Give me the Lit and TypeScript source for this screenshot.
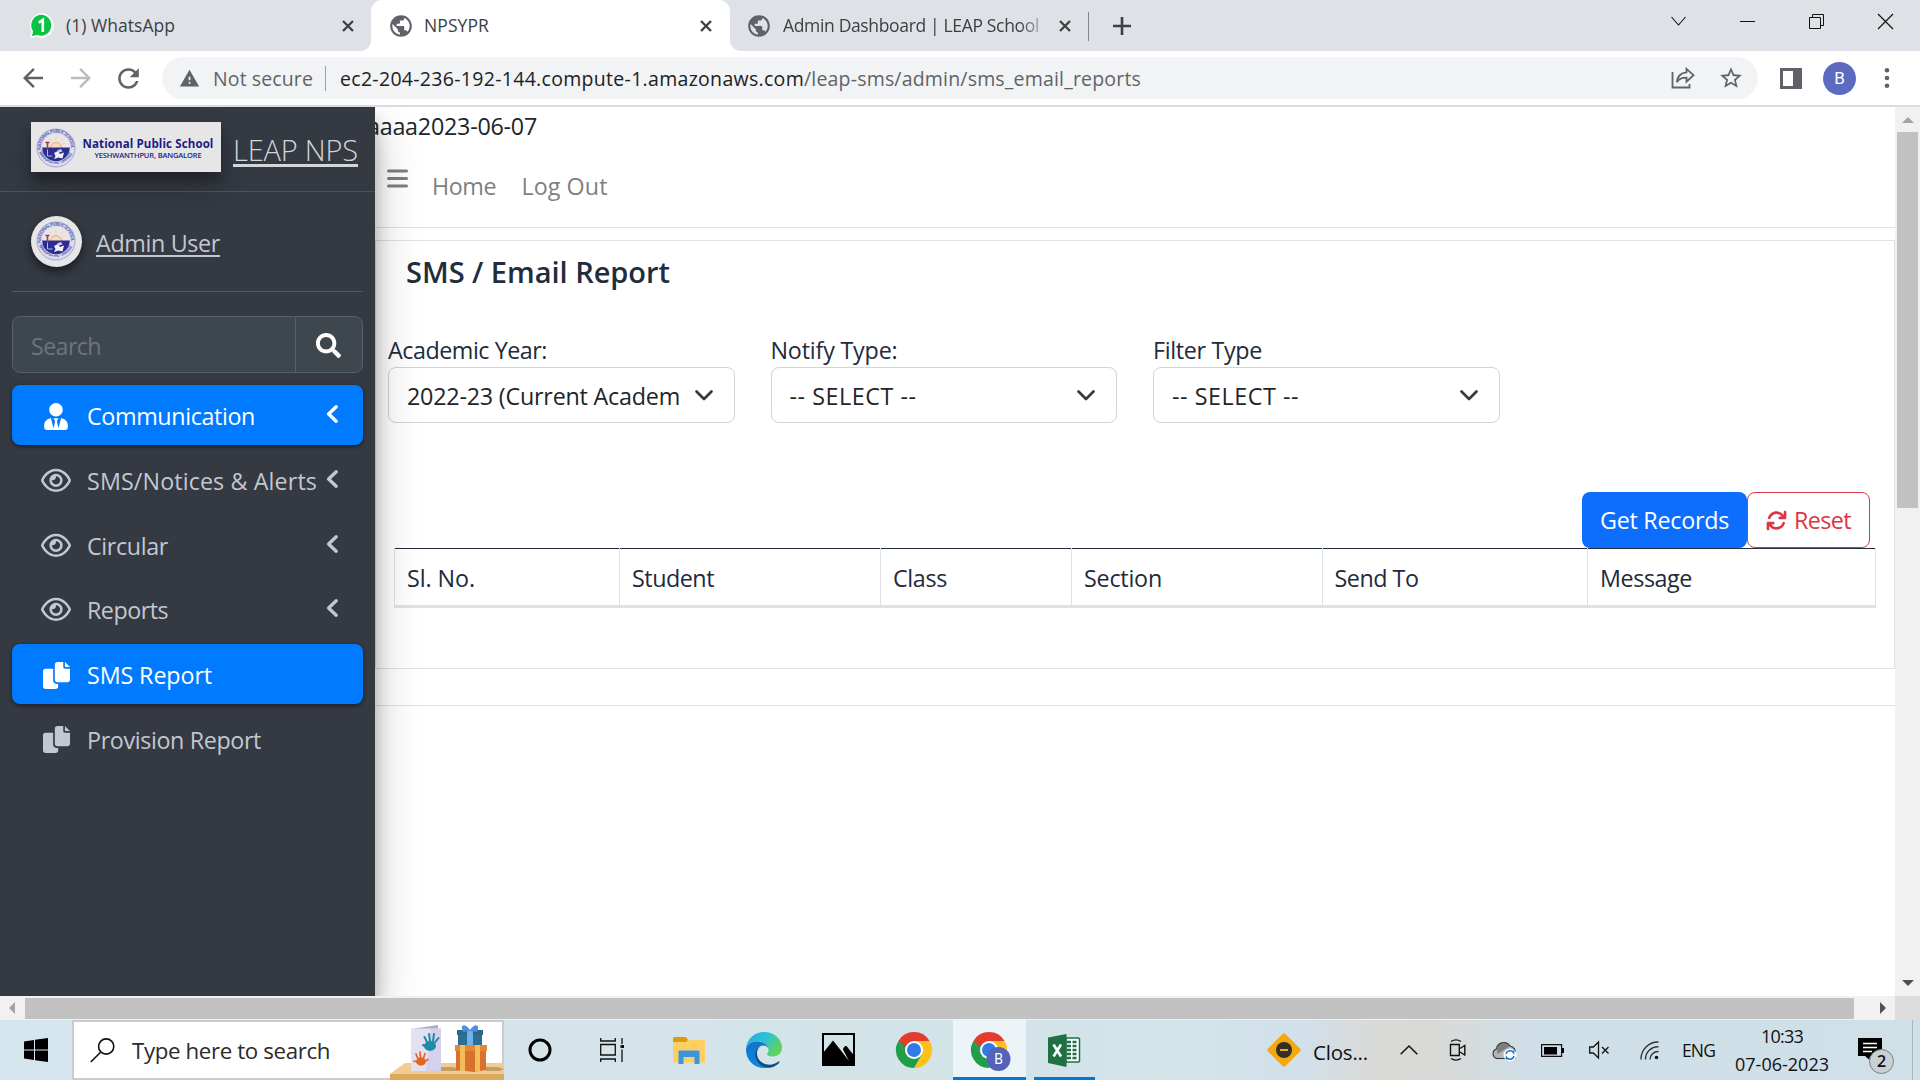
import { LitElement, html, svg, css, TemplateResult } from "lit";
import { classMap } from "lit/directives/class-map.js";

/* A run of text tracked so that it fills exactly `w` pixels. */
class FitText extends LitElement {
  static properties = { text: {}, w: { type: Number } };
  declare text: string;
  declare w: number;
  static styles = css`
    :host { display: inline-block; white-space: pre; flex: none; }
  `;
  updated() {
    const span = this.renderRoot.querySelector("span")!;
    span.style.letterSpacing = "0px";
    const natural = span.getBoundingClientRect().width;
    span.style.letterSpacing = (this.w - natural) / this.text.length + "px";
    this.style.width = this.w + "px";
  }
  render() {
    return html`<span>${this.text}</span>`;
  }
}
customElements.define("fit-text", FitText);

const fit = (text: string, w: number, cls = "") =>
  html`<fit-text class=${cls} .text=${text} .w=${w}></fit-text>`;

const icon = (cls: string, viewBox: string, body: TemplateResult) =>
  html`<svg class=${cls} viewBox=${viewBox} fill="currentColor">${body}</svg>`;

const path = (d: string) => svg`<path d=${d}></path>`;

const P = {
  globe: "M12 2C6.48 2 2 6.48 2 12s4.48 10 10 10 10-4.48 10-10S17.52 2 12 2zm-1 17.93c-3.95-.49-7-3.85-7-7.93 0-.62.08-1.21.21-1.79L9 15v1c0 1.1.9 2 2 2v1.93zm6.9-2.54c-.26-.81-1-1.39-1.9-1.39h-1v-3c0-.55-.45-1-1-1H8v-2h2c.55 0 1-.45 1-1V7h2c1.1 0 2-.9 2-2v-.41c2.93 1.19 5 4.06 5 7.41 0 2.08-.8 3.97-2.1 5.39z",
  reload: "M17.65 6.35C16.2 4.9 14.21 4 12 4c-4.42 0-7.99 3.58-7.99 8s3.57 8 7.99 8c3.73 0 6.84-2.55 7.73-6h-2.08c-.82 2.33-3.04 4-5.65 4-3.31 0-6-2.69-6-6s2.69-6 6-6c1.66 0 3.14.69 4.22 1.78L13 11h7V4l-2.35 2.35z",
  back: "M20 11H7.83l5.59-5.59L12 4l-8 8 8 8 1.41-1.41L7.83 13H20v-2z",
  forward: "M12 4l-1.41 1.41L16.17 11H4v2h12.17l-5.58 5.59L12 20l8-8z",
  star: "M22 9.24l-7.19-.62L12 2 9.19 8.63 2 9.24l5.46 4.73L5.82 21 12 17.27 18.18 21l-1.63-7.03L22 9.24zM12 15.4l-3.76 2.27 1-4.28-3.32-2.88 4.38-.38L12 6.1l1.71 4.04 4.38.38-3.32 2.88 1 4.28L12 15.4z",
  warn: "M1 21h22L12 2 1 21zm12-3h-2v-2h2v2zm0-4h-2v-4h2v4z",
  search: "M505 442.7L405.3 343c-4.5-4.5-10.6-7-17-7H372c27.6-35.3 44-79.7 44-128C416 93.1 322.9 0 208 0S0 93.1 0 208s93.1 208 208 208c48.3 0 92.7-16.4 128-44v16.3c0 6.4 2.5 12.5 7 17l99.7 99.7c9.4 9.4 24.6 9.4 33.9 0l28.3-28.3c9.4-9.4 9.4-24.6.1-34zM208 336c-70.7 0-128-57.2-128-128 0-70.7 57.2-128 128-128 70.7 0 128 57.2 128 128 0 70.7-57.2 128-128 128z",
  tie: "M224 256c70.7 0 128-57.3 128-128S294.7 0 224 0 96 57.3 96 128s57.3 128 128 128zm95.8 32.6L272 480l-32-136 32-56h-96l32 56-32 136-47.8-191.4C56.9 292 0 350.3 0 422.4V464c0 26.5 21.5 48 48 48h352c26.5 0 48-21.5 48-48v-41.6c0-72.1-56.9-130.4-128.2-133.8z",
  eye: "M288 80c-65.2 0-118.8 29.6-159.9 67.7C89.6 183.5 63 226 49.4 256c13.6 30 40.2 72.5 78.6 108.3C169.2 402.4 222.8 432 288 432s118.8-29.6 159.9-67.7C486.4 328.5 513 286 526.6 256c-13.6-30-40.2-72.5-78.6-108.3C406.8 109.6 353.2 80 288 80zM95.4 112.6C142.5 68.8 207.2 32 288 32s145.5 36.8 192.6 80.6c46.8 43.5 78.1 95.4 93 131.1c3.3 7.9 3.3 16.7 0 24.6c-14.9 35.7-46.2 87.7-93 131.1C433.5 443.2 368.8 480 288 480s-145.5-36.8-192.6-80.6C48.6 356 17.3 304 2.5 268.3c-3.3-7.9-3.3-16.7 0-24.6C17.3 208 48.6 156 95.4 112.6zM288 336c44.2 0 80-35.8 80-80s-35.8-80-80-80c-.7 0-1.3 0-2 0c1.3 5.1 2 10.5 2 16c0 35.3-28.7 64-64 64c-5.5 0-10.9-.7-16-2c0 .7 0 1.3 0 2c0 44.2 35.8 80 80 80zm0-208a128 128 0 1 1 0 256 128 128 0 1 1 0-256z",
  copy: "M384 96L384 0h-112c-26.51 0-48 21.49-48 48v288c0 26.51 21.49 48 48 48H464c26.51 0 48-21.49 48-48V128h-95.1C398.4 128 384 113.6 384 96zM416 0v96h96L416 0zM192 352V128h-144c-26.51 0-48 21.49-48 48v288c0 26.51 21.49 48 48 48h192c26.51 0 48-21.49 48-48L288 416h-32C220.7 416 192 387.3 192 352z",
  rotate: "M464 16c-17.67 0-32 14.31-32 32v74.09C392.1 66.52 327.4 32 256 32C161.5 32 78.59 92.34 49.58 182.2c-5.438 16.81 3.797 34.88 20.61 40.28c16.89 5.5 34.88-3.812 40.3-20.59C130.9 138.5 189.4 96 256 96c50.5 0 96.26 24.55 124.4 64H336c-17.67 0-32 14.31-32 32s14.33 32 32 32h128c17.67 0 32-14.31 32-32V48C496 30.31 481.7 16 464 16zM441.8 289.6c-16.92-5.438-34.88 3.812-40.3 20.59C381.1 373.5 322.6 416 256 416c-50.5 0-96.25-24.55-124.4-64H176c17.67 0 32-14.31 32-32s-14.33-32-32-32h-128c-17.67 0-32 14.31-32 32v144c0 17.69 14.33 32 32 32s32-14.31 32-32v-74.09C119.9 445.5 184.6 480 255.1 480c94.45 0 177.4-60.34 206.4-150.2C467.9 313 458.6 294.1 441.8 289.6z",
};

const base = css`
  * { box-sizing: border-box; }
  svg { display: block; flex: none; overflow: visible; }
`;

/* ---------- Browser chrome: tab strip and toolbar ---------- */
class BrowserChrome extends LitElement {
  static styles = [base, css`
    :host { display: block; color: #3c4043; }
    .tabs { display: flex; height: 51px; background: #dee1e6; font-size: 17.5px; line-height: 51px; }
    .tab { display: flex; align-items: center; height: 51px; }
    .t1 { width: 371px; padding: 0 17px 0 29px; }
    .t2 { width: 359px; padding: 0 18px 0 17px; background: #fff; border-radius: 11px 11px 0 0; position: relative; }
    .t2::before, .t2::after { content: ""; position: absolute; bottom: 0; width: 10px; height: 10px; }
    .t2::before { left: -10px; background: radial-gradient(circle at 0 0, transparent 9.5px, #fff 10px); }
    .t2::after { right: -10px; background: radial-gradient(circle at 100% 0, transparent 9.5px, #fff 10px); }
    .t3 { width: 358px; padding: 0 17px 0 16px; }
    .fav { width: 26px; height: 26px; color: #5f6368; }
    .wa { width: 26px; height: 26px; margin-right: 11px; }
    .gap { margin-right: 11px; }
    .t2 .gap { margin-right: 10px; }
    .x { width: 12px; height: 12px; margin-left: auto; color: #3c4043; }
    .fade { -webkit-mask-image: linear-gradient(90deg, #000 92%, rgba(0,0,0,.35) 100%); mask-image: linear-gradient(90deg, #000 92%, rgba(0,0,0,.35) 100%); }
    .rule { width: 1px; height: 29px; background: #80868b; margin-top: 12px; }
    .plus { width: 18px; height: 18px; margin: 17px 0 0 24px; }
    .win { display: flex; margin-left: auto; gap: 54px; padding: 14px 27px 0 0; color: #111; }
    .win svg { width: 15px; height: 15px; }
    .bar { display: flex; align-items: center; height: 54px; background: #fff; padding-left: 18px; font-size: 19.5px; color: #5f6368; }
    .nav { width: 30px; height: 30px; }
    .n2 { margin-left: 18px; color: #babcbe; }
    .n3 { width: 31px; height: 31px; margin-left: 17px; }
    .omni { display: flex; align-items: center; width: 1596px; height: 42px; margin-left: 18px; background: #f1f3f4; border-radius: 21px; padding: 0 14px 0 17px; }
    .warn { width: 21px; height: 21px; margin-right: 13px; }
    .sep { width: 1px; height: 25px; margin: 0 14px 0 12px; background: #9aa0a6; }
    .host { color: #202124; }
    .share { width: 24px; height: 22px; margin-left: auto; }
    .star { width: 26px; height: 26px; margin-left: 23px; }
    .panel { width: 22px; height: 21px; margin-left: 22px; }
    .me { width: 33px; height: 33px; margin-left: 21px; border-radius: 50%; background: #5c6bc0; color: #fff; font: 17px/33px Roboto, sans-serif; text-align: center; }
    .dots { width: 6px; height: 20px; margin-left: 28px; }
    .line { height: 2px; background: #dadce0; }
  `];
  cross() {
    return html`<svg class="x" viewBox="0 0 12 12"><path d="M1 1l10 10M11 1L1 11" stroke="currentColor" stroke-width="2.3"></path></svg>`;
  }
  render() {
    return html`
      <div class="tabs">
        <div class="tab t1">
          <svg class="wa" viewBox="0 0 26 26">
            <path d="M1 25l1.500-6A12 12.500 0 1 1 8 24z" fill="#f4fbf5"></path>
            <path d="M3 23l1.200-4.500A10 10.500 0 1 1 8.500 22z" fill="#0cc143"></path>
            <path d="M9.800 9.600l4-2.600v12" fill="none" stroke="#fff" stroke-width="2.600"></path>
          </svg>
          ${fit("(1) WhatsApp", 109)}${this.cross()}
        </div>
        <div class="tab t2">
          ${icon("fav gap", "0 0 24 24", path(P.globe))}${fit("NPSYPR", 65)}${this.cross()}
        </div>
        <div class="tab t3">
          ${icon("fav gap", "0 0 24 24", path(P.globe))}${fit("Admin Dashboard | LEAP School", 256, "fade")}${this.cross()}
        </div>
        <div class="rule"></div>
        <svg class="plus" viewBox="0 0 18 18"><path d="M9 0v18M0 9h18" stroke="#3c4043" stroke-width="2.600"></path></svg>
        <div class="win">
          <svg viewBox="0 0 15 15"><path d="M.5 3l7 8 7-8" fill="none" stroke="currentColor" stroke-width="1.100"></path></svg>
          <svg viewBox="0 0 15 15"><path d="M0 7.500h15" stroke="currentColor"></path></svg>
          <svg viewBox="0 0 15 15"><path d="M.5 3.500h11v11H.5zM3.500 3.500v-3h11v11h-3" fill="none" stroke="currentColor"></path></svg>
          <svg viewBox="0 0 15 15"><path d="M0 0l15 15M15 0L0 15" stroke="currentColor" stroke-width="1.200"></path></svg>
        </div>
      </div>
      <div class="bar">
        ${icon("nav", "0 0 24 24", path(P.back))}
        ${icon("nav n2", "0 0 24 24", path(P.forward))}
        ${icon("nav n3", "0 0 24 24", path(P.reload))}
        <div class="omni">
          ${icon("warn", "0 0 24 24", path(P.warn))}
          ${fit("Not secure", 100)}
          <div class="sep"></div>
          ${fit("ec2-204-236-192-144.compute-1.amazonaws.com", 464, "host")}${fit("/leap-sms/admin/sms_email_reports", 337)}
          <svg class="share" viewBox="0 0 24 22" fill="none" stroke="currentColor" stroke-width="1.800">
            <path d="M1.500 5v15.500h17V17"></path>
            <path d="M15.500 1.800l7 6.400-7 6.400v-3.900c-4.500-.2-7.500 1.200-9.700 4.500.6-5.500 3.500-9.300 9.700-9.900z"></path>
          </svg>
          ${icon("star", "0 0 24 24", path(P.star))}
        </div>
        <svg class="panel" viewBox="0 0 22 21"><path d="M0 0h22v21H0zM3 3v15h10V3z" fill="currentColor" fill-rule="evenodd"></path></svg>
        <div class="me">B</div>
        <svg class="dots" viewBox="0 0 6 20" fill="currentColor"><circle cx="3" cy="2.300" r="2.300"></circle><circle cx="3" cy="10" r="2.300"></circle><circle cx="3" cy="17.700" r="2.300"></circle></svg>
      </div>
      <div class="line"></div>`;
  }
}
customElements.define("browser-chrome", BrowserChrome);

/* ---------- School seal ---------- */
class SchoolSeal extends LitElement {
  static styles = css`:host { display: block; } svg { display: block; width: 100%; height: 100%; } .ring { font: 700 4.800px "Open Sans", sans-serif; fill: #6668b8; }`;
  render() {
    return html`<svg viewBox="0 0 40 40">
      <circle cx="20" cy="20" r="19" fill="#dcdcec" stroke="#a3a4d4" stroke-width="1"></circle>
      <defs>
        <path id="up" d="M5.200 22A15 15 0 1 1 34.800 22"></path>
        <path id="down" d="M3 24A18.200 18.200 0 0 0 37 24"></path>
      </defs>
      <text class="ring"><textPath href="#up" textLength="50">NATIONAL PUBLIC SCHOOL</textPath></text>
      <text class="ring"><textPath href="#down" textLength="42">BANGALORE - 560 022</textPath></text>
      <circle cx="20" cy="20" r="13.800" fill="#e9e6e4"></circle>
      <path d="M14.500 20a5.500 5.500 0 0 1 11 0" fill="#f5dcc0" stroke="#f0a860" stroke-width="1"></path>
      <path d="M20 8.500v3M13.500 10.500l1.500 2.500M26.500 10.500L25 13M29 15l-2.500 1.300" stroke="#f3c79a" stroke-width=".8"></path>
      <path d="M6.200 19.500h27.600a13.800 13.800 0 0 1-27.600 0z" fill="#2b2d92"></path>
      <path d="M9.500 14.500h4M11.500 15v6" stroke="#a23a44" stroke-width="1.600"></path>
      <path d="M11.500 21.500v6.500h5" fill="none" stroke="#b9bbe0" stroke-width="1"></path>
      <path d="M18 25l4-2 2 3 4-1.500-1.500 6-4-1-4.500 1.500 1.500-3z" fill="#f1f1f8"></path>
      <path d="M21 22.500l4-1.500 1.500 2.500-3.500 1z" fill="#cfd0ea"></path>
    </svg>`;
  }
}
customElements.define("school-seal", SchoolSeal);

/* ---------- Sidebar ---------- */
interface MenuItem { label: string; w: number; icon: "tie" | "eye" | "copy"; active?: boolean; arrow?: boolean; }
const MENU: MenuItem[] = [
  { label: "Communication", w: 168, icon: "tie", active: true, arrow: true },
  { label: "SMS/Notices & Alerts", w: 230, icon: "eye", arrow: true },
  { label: "Circular", w: 81, icon: "eye", arrow: true },
  { label: "Reports", w: 81, icon: "eye", arrow: true },
  { label: "SMS Report", w: 125, icon: "copy", active: true },
  { label: "Provision Report", w: 174, icon: "copy" },
];
const VB = { tie: "0 0 448 512", eye: "0 0 576 512", copy: "0 0 512 512" };

class SideBar extends LitElement {
  static styles = [base, css`
    :host { display: block; flex: none; width: 375px; height: 889px; background: #343942; color: #c2c7d0; font-size: 23.300px;
      box-shadow: 0 21px 42px rgba(0,0,0,.25), 0 15px 15px rgba(0,0,0,.22); position: relative; z-index: 2; }
    .brand { display: flex; height: 85px; padding: 15px 0 0 31px; border-bottom: 1px solid #4b545c; }
    .logo { display: flex; width: 190px; height: 50px; background: #e6e6e6; padding: 6px 0 0 5px;
      box-shadow: 0 15px 30px rgba(0,0,0,.19), 0 9px 9px rgba(0,0,0,.23); }
    .logo school-seal { width: 40px; height: 40px; }
    .words { display: flex; flex-direction: column; align-items: center; width: 130px; margin-left: 7px; padding-top: 9px; color: #1b1b85; }
    .l1 { font-size: 11.500px; font-weight: 700; line-height: 13px; }
    .l2 { font-size: 7.500px; font-weight: 600; line-height: 10px; }
    .name { font-size: 29px; font-weight: 300; line-height: 40px; margin: 8px 0 0 12px; color: #d3d6da; text-decoration: underline; text-decoration-thickness: 2.500px; text-underline-offset: 3px; }
    .user { display: flex; height: 100px; margin: 0 12px; padding: 24px 0 0 19px; border-bottom: 1px solid #4f5962; }
    .ava { width: 51px; height: 51px; border-radius: 50%; background: #e6e6e6; padding: 5px 6px 6px 5px; box-shadow: 0 5px 10px rgba(0,0,0,.3), 0 4px 6px rgba(0,0,0,.25); }
    .who { line-height: 36px; margin: 9px 0 0 14px; text-decoration: underline; text-decoration-thickness: 2px; text-underline-offset: 3px; }
    .find { display: flex; width: 351px; height: 57px; margin: 24px 12px 0; background: #3f474e; border: 1px solid #56606a; border-radius: 8px; }
    .ph { width: 282px; padding: 2px 0 0 18px; line-height: 54px; color: #6c757d; }
    .go { flex: 1; border-left: 1px solid #56606a; padding: 16px 0 0 20px; color: #fff; }
    .go svg { width: 25px; height: 25px; }
    ul { list-style: none; margin: 12px 12px 0; padding: 0; display: flex; flex-direction: column; gap: 4.750px; }
    li { display: flex; height: 60px; border-radius: 8px; padding: 0 25px 0 29px; line-height: 62px; }
    li.active { background: #007bff; color: #fff; box-shadow: 0 1.500px 4px rgba(0,0,0,.24), 0 1.500px 3px rgba(0,0,0,.2); }
    .ic { display: flex; width: 30px; height: 57px; align-items: center; justify-content: center; margin-right: 16px; padding-top: 3px; }
    .eye { width: 30px; height: 26.700px; margin-top: 1px; }
    .tie { width: 24px; height: 27px; margin-top: 2px; }
    .copy { width: 27px; height: 27px; margin-top: 2px; }
    .arrow { width: 12px; height: 18px; margin: 20px 0 0 auto; }
  `];
  render() {
    return html`
      <div class="brand">
        <div class="logo"><school-seal></school-seal>
          <div class="words">${fit("National Public School", 131, "l1")}${fit("YESHWANTHPUR, BANGALORE", 107, "l2")}</div>
        </div>
        ${fit("LEAP NPS", 125, "name")}
      </div>
      <div class="user"><school-seal class="ava"></school-seal>${fit("Admin User", 124, "who")}</div>
      <div class="find"><div class="ph">${fit("Search", 70)}</div><div class="go">${icon("", "0 0 512 512", path(P.search))}</div></div>
      <ul>
        ${MENU.map((m) => html`<li class=${classMap({ active: !!m.active })}>
          <span class="ic">${icon(m.icon, VB[m.icon], path(P[m.icon]))}</span>
          ${fit(m.label, m.w)}
          ${m.arrow ? html`<svg class="arrow" viewBox="0 0 12 18"><path d="M10.200 1.800L2.600 9l7.600 7.200" fill="none" stroke="currentColor" stroke-width="3.400" stroke-linecap="round" stroke-linejoin="round"></path></svg>` : ""}
        </li>`)}
      </ul>`;
  }
}
customElements.define("side-bar", SideBar);

/* ---------- Report page ---------- */
const FILTERS = [
  { label: "Academic Year:", lw: 159, value: "2022-23 (Current Academ", vw: 273 },
  { label: "Notify Type:", lw: 127, value: "-- SELECT --", vw: 127 },
  { label: "Filter Type", lw: 109, value: "-- SELECT --", vw: 127 },
];
const COLUMNS: [string, number, number][] = [
  ["Sl. No.", 68, 225], ["Student", 82, 261], ["Class", 54, 191], ["Section", 78, 250.5], ["Send To", 84, 265.5], ["Message", 92, 288],
];

class ReportPage extends LitElement {
  static styles = [base, css`
    :host { display: block; width: 1520px; height: 889px; background: #fff; color: #212b3c; font-size: 23.300px; line-height: 36px; }
    .stray { display: block; margin-left: -8px; padding-top: 1px; color: #212529; }
    .top { display: flex; height: 84px; border-bottom: 1px solid #dee2e6; color: #7f7f7f; padding: 24px 0 0 12px; }
    .burger { width: 21px; height: 19px; margin-top: 1px; }
    .home { margin: 0 25.500px 0 24px; }
    .card { height: 429px; margin-top: 12px; border: 1px solid #dee2e6; padding: 0 18px 0 12px; }
    h5 { margin: 0; padding: 11px 0 0 18px; font-size: 29px; font-weight: 600; line-height: 40px; color: #1f2d3d; }
    .filters { display: flex; gap: 36px; padding-top: 39px; }
    .filters > div { width: 346.500px; }
    .filters .lab { display: block; height: 36px; line-height: 38.500px; }
    .sel { display: flex; height: 56px; border: 1px solid #ced4da; border-radius: 8px; padding: 0 21px 0 18px; line-height: 56px; color: #212529; }
    .chev { width: 18px; height: 11px; margin: 22px 0 0 auto; }
    .acts { display: flex; justify-content: flex-end; padding: 69px 6px 0 0; }
    .get, .reset { display: flex; height: 56px; border-radius: 8px; line-height: 57.500px; }
    .get { width: 165px; padding-left: 18px; background: #0d6efd; color: #fff; }
    .reset { width: 123px; padding-left: 18px; border: 1px solid #dc3545; color: #dc3545; line-height: 55.500px; }
    .reset svg { width: 21px; height: 21px; margin: 17px 7px 0 0; }
    .table { display: flex; width: 1482px; height: 60px; margin-left: 6px; border-bottom: 3px solid #dee2e6; border-left: 1px solid #dee2e6; }
    .cell { border-right: 1px solid #dee2e6; padding-left: 12px; line-height: 58px; background: linear-gradient(#212d3d, #212d3d) 0 0 / 100% 1px no-repeat; height: 57px; padding-top: 1px; flex: none; }
    .foot { height: 37px; border-bottom: 1px solid #dee2e6; }
  `];
  render() {
    return html`
      ${fit("aaaa2023-06-07", 170, "stray")}
      <div class="top">
        <svg class="burger" viewBox="0 0 21 19"><path d="M1.500 2h18M1.500 9.500h18M1.500 17h18" stroke="currentColor" stroke-width="3" stroke-linecap="round"></path></svg>
        ${fit("Home", 64, "home")}${fit("Log Out", 86)}
      </div>
      <div class="card">
        <h5>${fit("SMS / Email Report", 264)}</h5>
        <div class="filters">
          ${FILTERS.map((f) => html`<div>
            ${fit(f.label, f.lw, "lab")}
            <div class="sel">${fit(f.value, f.vw)}
              <svg class="chev" viewBox="0 0 18 11"><path d="M1.500 1.500L9 9l7.500-7.500" fill="none" stroke="#343a40" stroke-width="2.700" stroke-linecap="round" stroke-linejoin="round"></path></svg>
            </div>
          </div>`)}
        </div>
        <div class="acts">
          <div class="get">${fit("Get Records", 129)}</div>
          <div class="reset">${icon("", "0 0 512 512", path(P.rotate))}${fit("Reset", 57)}</div>
        </div>
        <div class="table">
          ${COLUMNS.map(([t, w, cw]) => html`<div class="cell" style="width:${cw}px">${fit(t, w)}</div>`)}
        </div>
      </div>
      <div class="foot"></div>`;
  }
}
customElements.define("report-page", ReportPage);

/* ---------- Windows taskbar ---------- */
class TaskBar extends LitElement {
  static styles = [base, css`
    :host { display: flex; height: 60px; color: #111; font-size: 18px;
      background: linear-gradient(90deg, #d6e6ee 0, #d5e4eb 30%, #d2e4e8 50%, #d3e4ea 62%, #d2e0e9 68%, #dad9d5 72%, #d8dad7 75%, #cfdfe8 80%, #cfe0e7 100%); }
    .start { width: 24px; height: 24px; margin: 18px 24px 0 24px; }
    .box { display: flex; width: 432px; height: 60px; background: #fff; border: 2px solid #ccc; font-size: 22.300px; line-height: 58px; color: #2b2b2b; }
    .mag { width: 25px; height: 25px; margin: 16px 17px 0 16px; }
    .art { width: 114px; height: 60px; margin: -2px -2px 0 auto; }
    .cort { width: 24px; height: 24px; margin: 18px 0 0 24px; }
    .tv { width: 24px; height: 24px; margin: 18px 0 0 48px; }
    .ex { width: 32px; height: 27px; margin: 17px 0 0 49px; }
    .edge { width: 36px; height: 36px; margin: 12px 0 0 41px; }
    .pic { width: 33px; height: 33px; margin: 13px 0 0 40px; }
    .chrome { width: 36px; height: 36px; margin: 12px 0 0 41px; }
    .on { width: 73px; height: 60px; margin-left: 21px; background: #edf4f7; border-bottom: 3px solid #0078d7; padding: 12px 0 0 18px; }
    .on svg { width: 40px; height: 40px; }
    .b { font: 14px Roboto, sans-serif; fill: #fff; text-anchor: middle; }
    .xl { width: 61px; height: 60px; margin-left: 8px; border-bottom: 3px solid #0078d7; padding: 14px 0 0 14px; }
    .xl svg { width: 32px; height: 33px; }
    .tray { display: flex; margin-left: auto; }
    .dia { width: 34px; height: 34px; margin: 13px 12px 0 0; }
    .clos { font-size: 20.500px; line-height: 64px; }
    .up { width: 18px; height: 10px; margin: 25px 0 0 32px; }
    .cam { width: 17px; height: 22px; margin: 19px 0 0 31px; }
    .cloud { width: 25px; height: 20px; margin: 21px 0 0 26px; }
    .bat { width: 23px; height: 13px; margin: 24px 0 0 24px; }
    .spk { width: 21px; height: 18px; margin: 21px 0 0 25px; }
    .wifi { width: 19px; height: 19px; margin: 21px 0 0 30px; }
    .eng { line-height: 61px; margin-left: 23px; font-size: 17.500px; }
    .clock { display: flex; flex-direction: column; align-items: center; width: 94px; margin-left: 20px; line-height: 28px; padding-top: 2px; }
    .note { width: 37px; height: 37px; margin: 17px 0 0 29px; }
    .n { font: 600 16px "Open Sans", sans-serif; text-anchor: middle; fill: #111; }
    .peek { width: 1px; margin: 0 7px 0 17px; background: #a8b6bc; }
  `];
  chromeIcon(cls: string, vb: string, badge: boolean) {
    return html`<svg class=${cls} viewBox=${vb}>
      <path d="M2.400 9A18 18 0 0 1 33.600 9H18z" fill="#e33b2e"></path>
      <path d="M33.600 9A18 18 0 0 1 18 36l7.800-13.500L18 9z" fill="#fcc21b"></path>
      <path d="M18 36A18 18 0 0 1 2.400 9l7.800 13.500 15.600 0z" fill="#1f9d49"></path>
      <path d="M2.400 9L10.200 22.500 18 18V9z" fill="#e33b2e"></path>
      <path d="M2.400 9l7.800 13.500L12 16z" fill="#1f9d49"></path>
      <circle cx="18" cy="18" r="9" fill="#fff"></circle>
      <circle cx="18" cy="18" r="7" fill="#2f7be8"></circle>
      ${badge ? svg`<circle cx="27.500" cy="27" r="12" fill="#5463b8"></circle><text class="b" x="27.500" y="32">B</text>` : ""}
    </svg>`;
  }
  render() {
    return html`
      <svg class="start" viewBox="0 0 24 24"><path d="M0 3.400L10 2v9.500H0zM11 1.800L24 0v11.500H11zM0 12.500h10V22L0 20.600zM11 12.500h13V24l-13-1.800z" fill="#000"></path></svg>
      <div class="box">
        <svg class="mag" viewBox="0 0 25 25" fill="none" stroke="#111" stroke-width="1.600"><circle cx="16.200" cy="8.500" r="7.600"></circle><path d="M10.800 14L.8 24"></path></svg>
        ${fit("Type here to search", 198)}
        <svg class="art" viewBox="0 0 114 60">
          <path d="M0 54l15-11h99v11z" fill="#f0cb92"></path><path d="M0 54h114v6H0z" fill="#dba95e"></path>
          <path d="M51 51h16l5-2-10-2H51zM96 51h14l4-2-6-2H96z" fill="#c79c5f"></path>
          <path d="M21 9l27-4v4z" fill="#9fb2c4"></path>
          <path d="M21 8.500h30V51H21z" fill="#e3e0f1"></path><path d="M41 8.500h10V51H36z" fill="#cfc9e8" opacity=".7"></path>
          <g stroke="#1e8ba8" stroke-width="2" stroke-linecap="round" fill="#1e8ba8"><ellipse cx="40" cy="26" rx="5" ry="4"></ellipse><path d="M37 22l-2.500-5M40 21l-1-7M43 21l1-7M44.500 23l4-5M37 27l-4-2"></path></g>
          <g stroke="#e2671f" stroke-width="1.700" stroke-linecap="round" fill="#e2671f"><ellipse cx="31" cy="41.500" rx="4" ry="3.300"></ellipse><path d="M28 39l-2-5M30.500 38l-.5-6M33.500 38.500l1.500-5M28 42l-4-1M34.500 41.500l3.500-2"></path></g>
          <path d="M68 12h24v13H68z" fill="#2c6f96"></path><path d="M67 10h26v5H67z" fill="#2f6687"></path><path d="M77 10h6v15h-6z" fill="#70b2f0"></path>
          <path d="M80 10c-4-6-9-6-8-1l1 3 7-1 7 1 1-3c1-5-4-5-8 1z" fill="#4b8fe0"></path>
          <path d="M66 28h30v22l-12 2-18-2z" fill="#d8712b"></path><path d="M65 25h32v6H65z" fill="#e68638"></path><path d="M70 25h5v26h-5zM85 25h5v26l-5 1z" fill="#f3bd5a"></path>
        </svg>
      </div>
      <svg class="cort" viewBox="0 0 24 24"><circle cx="12" cy="12" r="10" fill="none" stroke="#000" stroke-width="3"></circle></svg>
      <svg class="tv" viewBox="0 0 24 24" fill="none" stroke="#111" stroke-width="1.300"><path d="M.7 0v3h14.600V0M.7 24v-3h14.600v3M.7 6.500h14.600v10.500H.7zM22 0v6M22 11.500V24"></path><path d="M20.500 7h3.500v3h-3.500z" fill="#111" stroke="none"></path></svg>
      <svg class="ex" viewBox="0 0 32 27"><path d="M0 1.500Q0 0 1.500 0H13l2 3v3H0z" fill="#dd9a09"></path><path d="M0 5h13l2-2h17v22.500H0z" fill="#fdcf62"></path><path d="M5.500 27V14.500q0-1 1-1h19q1 0 1 1V27h-5v-7h-11v7z" fill="#3a96dd"></path></svg>
      <svg class="edge" viewBox="0 0 36 36">
        <defs>
          <linearGradient id="ea" x1="0" y1="0" x2="1" y2=".5"><stop offset="0" stop-color="#2aa7ea"></stop><stop offset=".55" stop-color="#2cc3d2"></stop><stop offset="1" stop-color="#5fd45a"></stop></linearGradient>
          <linearGradient id="eb" x1="0" y1="0" x2=".4" y2="1"><stop offset="0" stop-color="#1273c4"></stop><stop offset="1" stop-color="#0f86e4"></stop></linearGradient>
        </defs>
        <path d="M0 17C.5 7 8.500 0 18 0c10.500 0 18 7.500 18 15.500 0 6-4.500 9-9.500 9-3.800 0-5.500-1.200-5.500-2.300 0-1 1.700-1.700 1.700-4.700C22.700 13 18 9.500 12 9.500 5.500 9.500 1 13 0 17z" fill="url(#ea)"></path>
        <path d="M0 17c1-4.500 5.500-7.500 11-7.500 7 0 11.700 3.600 11.700 8-.5-2.500-3-4-5.500-4-4 0-7 4-7 8.500C10.200 29 16 34.500 22 35.500c-1.300.3-2.600.5-4 .5C8 36 0 28 0 18z" fill="url(#eb)"></path>
        <path d="M14 14.600c-5 4.400-3.500 12.400 2 15.900 5.500 3.500 12 2.500 16.500-1 .7-.4 1.200.2.800.9C30.500 34 25 36.300 21 35.700 14 34.500 9.300 28.500 9.300 22.500c0-3.500 2-6.500 4.700-7.900z" fill="#114a8b"></path>
      </svg>
      <svg class="pic" viewBox="0 0 33 33"><path d="M1 1h31v31H1z" fill="none" stroke="#000" stroke-width="2"></path><path d="M1 20L11 7.500l9.500 12L27 28l-6-11.500c.5-2.500 2-4 3.500-3.500L32 22.500V33H1z" fill="#000"></path></svg>
      ${this.chromeIcon("chrome", "0 0 36 36", false)}
      <div class="on">${this.chromeIcon("", "0 0 40 40", true)}</div>
      <div class="xl"><svg viewBox="0 0 32 33"><path d="M18 4h12.500q1 0 1 1v22q0 1-1 1H18z" fill="#fff" stroke="#1f7145" stroke-width="1.500"></path><path d="M19 8h10M19 12h10M19 16h10M19 20h10M19 24h10" stroke="#1f7145" stroke-width="2.400" stroke-dasharray="4 1.500"></path><path d="M0 3.500L18.500 0v33L0 29z" fill="#1f7145"></path><path d="M5.500 10.500l7.500 12M13 10.500l-7.500 12" stroke="#fff" stroke-width="2.600"></path></svg></div>
      <div class="tray">
        <svg class="dia" viewBox="0 0 34 34"><path d="M15.500 1q1.500-1.500 3 0L33 15.500q1.500 1.500 0 3L18.500 33q-1.500 1.500-3 0L1 18.500q-1.500-1.500 0-3z" fill="#f5a80c"></path><circle cx="17" cy="17" r="8" fill="#33302c"></circle><path d="M13 17h8" stroke="#f5a80c" stroke-width="2"></path></svg>
        ${fit("Clos...", 55, "clos")}
        <svg class="up" viewBox="0 0 18 10"><path d="M.7 9.300L9 1l8.300 8.300" fill="none" stroke="#111" stroke-width="1.500"></path></svg>
        <svg class="cam" viewBox="0 0 17 22" fill="none" stroke="#111" stroke-width="1.400"><path d="M1.500 5.500h8.800v11H1.500zM11 9.500l4.800-3v9.500L11 13M2 2.500q5-3.200 10 0M2 19.500q5 3.200 10 0"></path></svg>
        <svg class="cloud" viewBox="0 0 25 20"><path d="M5 17.500a5 5 0 0 1-.6-9.600A7.500 7.500 0 0 1 18 5a6 6 0 0 1 5 7.500v5z" fill="#b4b4b4" stroke="#333" stroke-width="1.100"></path><path d="M5 7.500A7.200 7.200 0 0 1 17.500 5.300L5.500 13z" fill="#7d7d7d"></path><circle cx="18" cy="14" r="6.500" fill="#fff"></circle><path d="M14 13a4.200 4.200 0 0 1 7.500-1.500v-2M22 15a4.200 4.200 0 0 1-7.500 1.500v2" fill="none" stroke="#1479d0" stroke-width="1.600"></path></svg>
        <svg class="bat" viewBox="0 0 23 13"><path d="M.6.6h20v11.800h-20z" fill="none" stroke="#111" stroke-width="1.200"></path><path d="M21 4h2v5h-2zM3 3h13v7.500H3z" fill="#000"></path></svg>
        <svg class="spk" viewBox="0 0 21 18" fill="none" stroke="#111" stroke-width="1.300"><path d="M.7 6h3.600L9.500 1v16L4.300 12H.7zM13 6l6.500 6.500M19.500 6L13 12.500"></path></svg>
        <svg class="wifi" viewBox="0 0 19 19" fill="none" stroke="#333" stroke-width="1.400"><path d="M1 18.500A17 17 0 0 1 18.500 1M5.500 18.500A12.500 12.500 0 0 1 18.500 5.800M10 18.500A8 8 0 0 1 18.500 10.500"></path><circle cx="16.500" cy="16.500" r="1.800" fill="#111" stroke="none"></circle></svg>
        ${fit("ENG", 33, "eng")}
        <div class="clock">${fit("10:33", 42)}${fit("07-06-2023", 94)}</div>
        <svg class="note" viewBox="0 0 37 37"><path d="M0 1h24v18H12l-.5 4L7 19H0z" fill="#000"></path><path d="M5 6.500h14M5 10.500h14M5 14.500h9" stroke="#fff" stroke-width="1.300"></path><circle cx="23.500" cy="24.500" r="12" fill="#c9d0d4" stroke="#7c8286"></circle><text class="n" x="23.500" y="30">2</text></svg>
        <div class="peek"></div>
      </div>`;
  }
}
customElements.define("task-bar", TaskBar);

/* ---------- Whole desktop ---------- */
class AppRoot extends LitElement {
  static styles = [base, css`
    :host { display: block; width: 1920px; height: 1080px; overflow: hidden; font-family: "Open Sans", "Noto Sans", sans-serif; background: #fff; }
    .view { display: flex; height: 889px; overflow: hidden; }
    .view report-page { flex: none; }
    .vs { display: flex; flex-direction: column; align-items: center; width: 25px; height: 889px; background: #f1f1f1; position: relative; z-index: 3; }
    .vs svg { width: 12px; height: 6px; }
    .vs .a { margin-top: 10px; }
    .vs .thumb { width: 21px; height: 376px; margin-top: 9px; background: #c1c1c1; }
    .vs .z { margin: auto 0 10px; }
    .hs { display: flex; align-items: center; height: 24px; background: #f1f1f1; }
    .hs svg { width: 6px; height: 12px; }
    .hs .l { margin: 0 10px 0 9px; }
    .hs .thumb { width: 1829px; height: 21px; margin-top: 1px; background: #c1c1c1; }
    .hs .r { margin-left: 26px; }
    .hs .corner { width: 25px; height: 24px; margin-left: auto; background: #dcdcdc; }
  `];
  render() {
    return html`
      <browser-chrome></browser-chrome>
      <div class="view">
        <side-bar></side-bar>
        <report-page></report-page>
        <div class="vs">
          <svg class="a" viewBox="0 0 12 6"><path d="M0 6l6-6 6 6z" fill="#a3a3a3"></path></svg>
          <div class="thumb"></div>
          <svg class="z" viewBox="0 0 12 6"><path d="M0 0l6 6 6-6z" fill="#505050"></path></svg>
        </div>
      </div>
      <div class="hs">
        <svg class="l" viewBox="0 0 6 12"><path d="M6 0L0 6l6 6z" fill="#a3a3a3"></path></svg>
        <div class="thumb"></div>
        <svg class="r" viewBox="0 0 6 12"><path d="M0 0l6 6-6 6z" fill="#505050"></path></svg>
        <div class="corner"></div>
      </div>
      <task-bar></task-bar>`;
  }
}
customElements.define("app-root", AppRoot);
